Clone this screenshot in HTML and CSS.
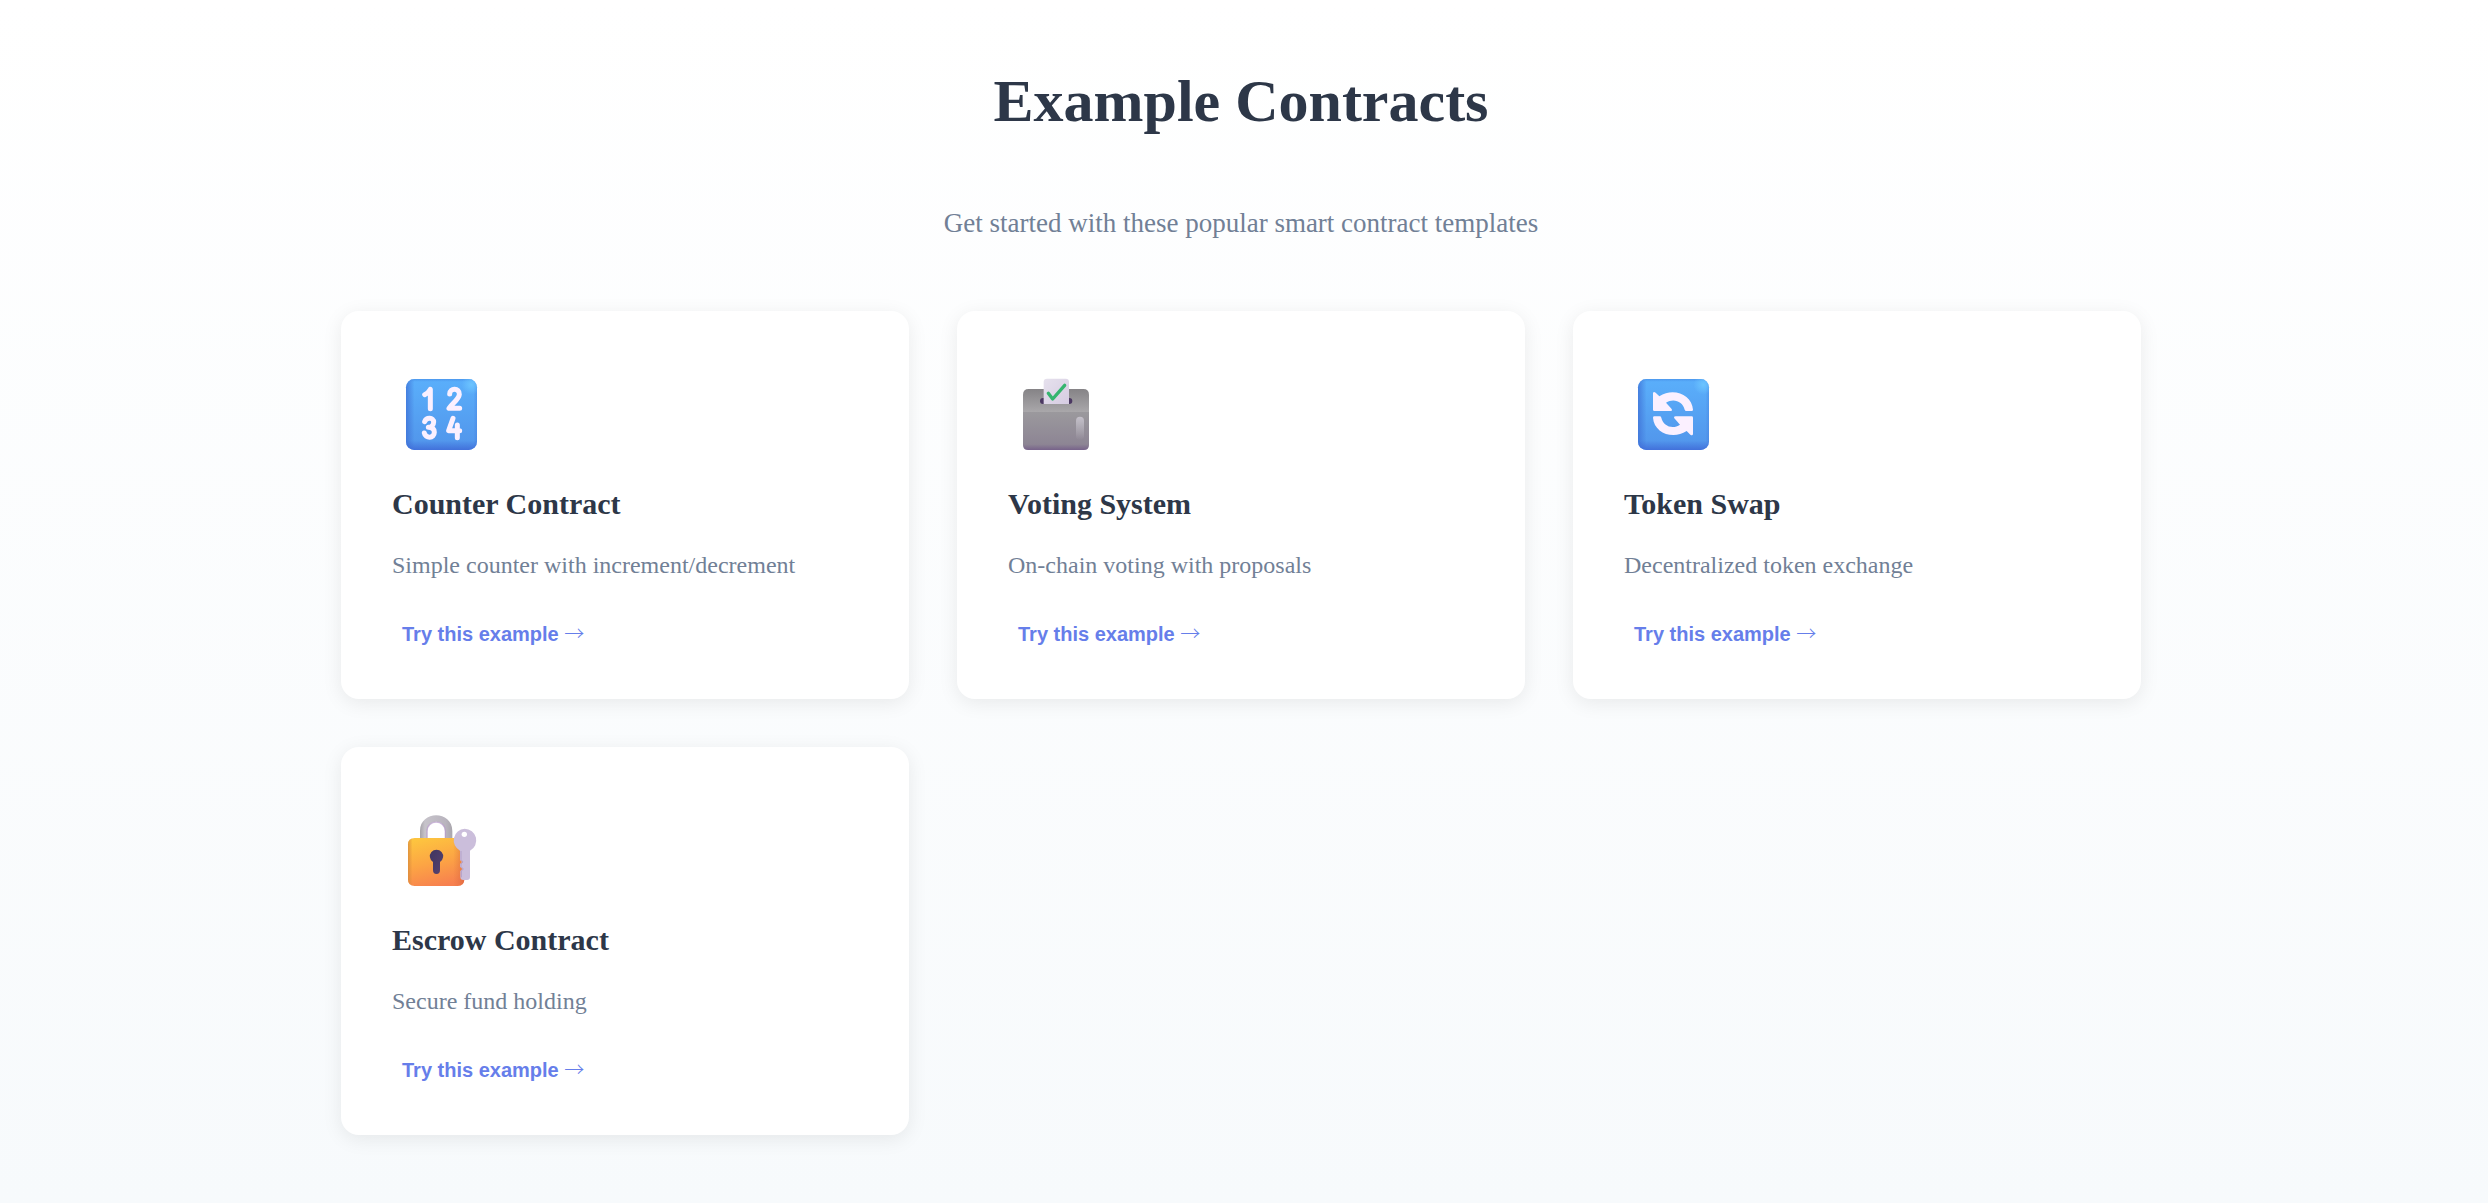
FILE: index.html
```html
<!DOCTYPE html>
<html lang="en">
<head>
<meta charset="utf-8">
<meta name="viewport" content="width=device-width, initial-scale=1">
<title>Example Contracts</title>
<link rel="stylesheet" href="styles.css">
</head>
<body>
<main class="examples">
  <h1 class="examples-title">Example Contracts</h1>
  <p class="examples-subtitle">Get started with these popular smart contract templates</p>
  <div class="examples-grid">
    <article class="card">
      <svg class="card-icon" viewBox="6 6 318 324" aria-hidden="true">
        <defs>
          <linearGradient id="blue" x1="0" y1="0" x2="0" y2="1"><stop offset="0" stop-color="#5aaffb"/><stop offset="1" stop-color="#5194ea"/></linearGradient>
          <linearGradient id="blueLeft" x1="0" y1="0" x2="1" y2="0"><stop offset="0" stop-color="#3e70d6" stop-opacity=".75"/><stop offset=".12" stop-color="#3e70d6" stop-opacity="0"/><stop offset=".95" stop-color="#3e70d6" stop-opacity="0"/><stop offset="1" stop-color="#3e70d6" stop-opacity=".3"/></linearGradient>
          <linearGradient id="blueBottom" x1="0" y1="1" x2="0" y2="0"><stop offset="0" stop-color="#3f6bd8" stop-opacity=".85"/><stop offset=".13" stop-color="#3f6bd8" stop-opacity="0"/><stop offset=".96" stop-color="#3f80e0" stop-opacity="0"/><stop offset="1" stop-color="#3f80e0" stop-opacity=".5"/></linearGradient>
          <radialGradient id="blueShine" cx=".92" cy=".08" r=".14"><stop offset="0" stop-color="#6cc4ff"/><stop offset="1" stop-color="#6cc4ff" stop-opacity="0"/></radialGradient>
        </defs>
        <rect x="48" y="57" width="213" height="213" rx="25" fill="url(#blue)"/>
        <rect x="48" y="57" width="213" height="213" rx="25" fill="url(#blueLeft)"/>
        <rect x="48" y="57" width="213" height="213" rx="25" fill="url(#blueBottom)"/>
        <rect x="48" y="57" width="213" height="213" rx="25" fill="url(#blueShine)"/>
        <g fill="none" stroke="#fbf0ff" stroke-width="15" stroke-linecap="round" stroke-linejoin="round">
          <path d="M104 104Q116 98 121 88V146"/>
          <path d="M179 102C179 82 209 84 208 103C207 118 187 130 177 145H209"/>
          <path d="M104 185C109 171 131 172 131 186C131 197 123 202 115 202C127 202 133 208 133 217C133 236 106 236 103 219"/>
          <path d="M189 175L176 212H209M202 195V233"/>
        </g>
      </svg>
      <h2 class="card-title">Counter Contract</h2>
      <p class="card-text">Simple counter with increment/decrement</p>
      <button class="card-button" type="button">Try this example <span class="arrow">→</span></button>
    </article>
    <article class="card">
      <svg class="card-icon" viewBox="24 6 318 324" aria-hidden="true">
        <defs>
          <linearGradient id="boxTop" x1="0" y1="0" x2="0" y2="1"><stop offset="0" stop-color="#858386"/><stop offset="1" stop-color="#aaa8ab"/></linearGradient>
          <linearGradient id="boxFront" x1="0" y1="0" x2="0" y2="1"><stop offset="0" stop-color="#9b999d"/><stop offset=".85" stop-color="#8d8594"/><stop offset="1" stop-color="#77628a"/></linearGradient>
          <linearGradient id="boxGlow" x1="0" y1="0" x2="0" y2="1"><stop offset="0" stop-color="#c4c0ca"/><stop offset="1" stop-color="#c4c0ca" stop-opacity="0"/></linearGradient>
          <linearGradient id="paper" x1="0" y1="0" x2="1" y2="1"><stop offset="0" stop-color="#e6e1ed"/><stop offset="1" stop-color="#d6cce2"/></linearGradient>
        </defs>
        <path d="M69 157V104Q69 87 86 87H250Q267 87 267 104V157Z" fill="url(#boxTop)"/>
        <path d="M69 156H267V255Q267 270 252 270H84Q69 270 69 255Z" fill="url(#boxFront)"/>
        <rect x="120" y="114" width="97" height="18" rx="9" fill="#4b3862"/>
        <path d="M131 132V66Q131 56 141 56H197Q207 56 207 66V132Z" fill="url(#paper)"/>
        <path d="M145 100L158 117L194 76" fill="none" stroke="#35b56f" stroke-width="10" stroke-linecap="round" stroke-linejoin="round"/>
        <rect x="228" y="170" width="24" height="70" rx="12" fill="url(#boxGlow)"/>
      </svg>
      <h2 class="card-title">Voting System</h2>
      <p class="card-text">On-chain voting with proposals</p>
      <button class="card-button" type="button">Try this example <span class="arrow">→</span></button>
    </article>
    <article class="card">
      <svg class="card-icon" viewBox="12 6 318 324" aria-hidden="true">
        <rect x="54" y="57" width="213" height="213" rx="25" fill="url(#blue)"/>
        <rect x="54" y="57" width="213" height="213" rx="25" fill="url(#blueLeft)"/>
        <rect x="54" y="57" width="213" height="213" rx="25" fill="url(#blueBottom)"/>
        <rect x="54" y="57" width="213" height="213" rx="25" fill="url(#blueShine)"/>
        <g fill="#fbf0ff">
          <path id="swapArrow" d="M99 100Q100 93 107 98L118 109C160 81 216 104 219 149Q219 153 215 153H199Q195 153 194 149C189 124 160 113 138 128L155 147Q158 153 151 153H103Q99 153 99 149Z"/>
          <use href="#swapArrow" transform="rotate(180 159 161)"/>
        </g>
      </svg>
      <h2 class="card-title">Token Swap</h2>
      <p class="card-text">Decentralized token exchange</p>
      <button class="card-button" type="button">Try this example <span class="arrow">→</span></button>
    </article>
    <article class="card">
      <svg class="card-icon" viewBox="6 -6 318 324" aria-hidden="true">
        <defs>
          <linearGradient id="lockBody" x1=".3" y1="0" x2=".6" y2="1"><stop offset="0" stop-color="#fdc43f"/><stop offset=".5" stop-color="#fca544"/><stop offset="1" stop-color="#f7804f"/></linearGradient>
          <linearGradient id="lockEdge" x1="0" y1="0" x2="1" y2="0"><stop offset="0" stop-color="#d98a3c" stop-opacity=".8"/><stop offset=".08" stop-color="#d98a3c" stop-opacity="0"/><stop offset=".8" stop-color="#d9703c" stop-opacity="0"/><stop offset="1" stop-color="#d9603c" stop-opacity=".6"/></linearGradient>
          <linearGradient id="shackle" x1="0" y1="0" x2="1" y2="0"><stop offset="0" stop-color="#a5a2a8"/><stop offset=".15" stop-color="#c6c3ca"/><stop offset=".8" stop-color="#b9b4be"/><stop offset="1" stop-color="#a9a6ac"/></linearGradient>
          <linearGradient id="keyhole" x1="0" y1="0" x2="1" y2="1"><stop offset="0" stop-color="#3e3560"/><stop offset="1" stop-color="#59426f"/></linearGradient>
        </defs>
        <path d="M90 120V93C90 30 187 30 187 93V120H165V94C165 56 112 56 112 94V120Z" fill="url(#shackle)"/>
        <path d="M111 117V94C111 57 166 57 166 94V117" fill="none" stroke="#b69acb" stroke-width="4" opacity=".7"/>
        <path d="M54 134Q54 114 74 114H203Q223 114 223 134V238Q223 258 203 258H74Q54 258 54 238Z" fill="url(#lockBody)"/>
        <path d="M54 134Q54 114 74 114H203Q223 114 223 134V238Q223 258 203 258H74Q54 258 54 238Z" fill="url(#lockEdge)"/>
        <path d="M129 186A20 20 0 1 1 150 186V210Q150 222 139.500 222Q129 222 129 210Z" fill="url(#keyhole)"/>
        <path d="M224 86A35 35 0 0 1 240 152V231Q240 240 231 240H220Q211 240 211 231V213L217 207L210 200V192L216 186L210 180V152A35 35 0 0 1 224 86Z" fill="#cbbedb"/>
        <path d="M213 153V179L219 186L213 192V200L220 207L214 213V232" fill="none" stroke="#b4a1c9" stroke-width="3"/>
        <circle cx="223" cy="103" r="8" fill="#fff"/>
      </svg>
      <h2 class="card-title">Escrow Contract</h2>
      <p class="card-text">Secure fund holding</p>
      <button class="card-button" type="button">Try this example <span class="arrow">→</span></button>
    </article>
  </div>
</main>
</body>
</html>
```
FILE: styles.css
```css
* {
  box-sizing: border-box;
  margin: 0;
}

body {
  min-height: 100vh;
  font-family: "Liberation Serif", "Times New Roman", serif;
  color: #2d3748;
  background: linear-gradient(180deg, #ffffff 0%, #f7fafc 100%);
}

.examples {
  padding: 68px 38px 68px 32px;
}

.examples-title {
  margin-bottom: 68px;
  font-size: 60px;
  line-height: 66px;
  font-weight: 700;
  text-align: center;
}

.examples-subtitle {
  margin-bottom: 67px;
  font-size: 27px;
  line-height: 42px;
  color: #718096;
  text-align: center;
}

.examples-grid {
  display: grid;
  grid-template-columns: repeat(auto-fit, minmax(420px, 1fr));
  gap: 48px;
  max-width: 1800px;
  margin: 0 auto;
}

.card {
  display: flex;
  flex-direction: column;
  align-items: flex-start;
  padding: 51px;
  border-radius: 18px;
  background: #ffffff;
  box-shadow: 0 4px 20px rgba(0, 0, 0, 0.08);
}

.card-icon {
  width: 106px;
  height: 108px;
  margin-bottom: 16px;
}

.card-title {
  margin-bottom: 26px;
  font-size: 30px;
  line-height: 36px;
  font-weight: 700;
}

.card-text {
  margin-bottom: 38px;
  font-size: 24px;
  line-height: 34px;
  color: #718096;
}

.card-button {
  padding: 2px 10px;
  border: 0;
  background: none;
  font-family: "Liberation Sans", Arial, sans-serif;
  font-size: 20px;
  line-height: 24px;
  font-weight: 600;
  color: #667eea;
  cursor: pointer;
}

.arrow {
  font-family: "Noto Sans CJK JP", sans-serif;
  font-weight: 300;
  line-height: 1;
}
```
